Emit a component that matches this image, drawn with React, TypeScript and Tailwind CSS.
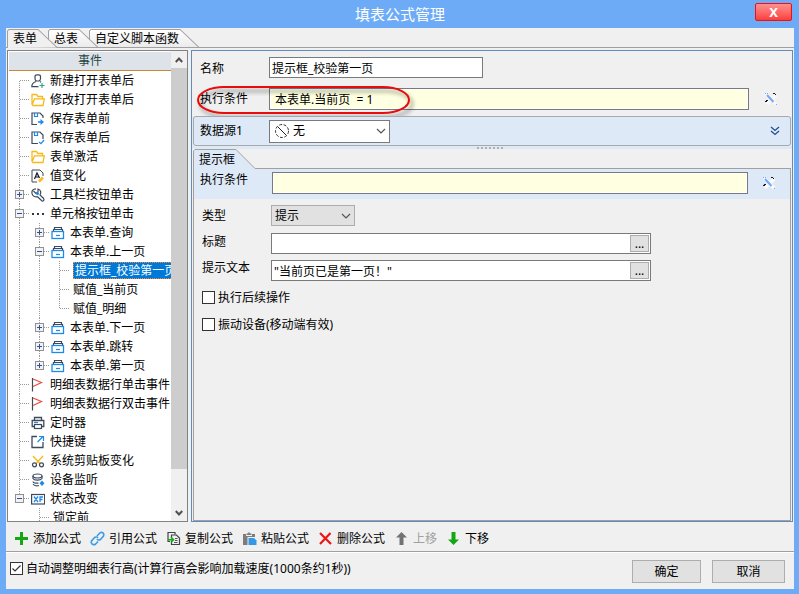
import React, { useState } from "react";

type Guide = "none" | "line" | "first" | "tee" | "last" | "plus" | "minus" | "minusLast" | "plusLast";
type TreeRow = { guides: Guide[]; icon?: IconName; text: string; selected?: boolean };
type IconName =
  | "user" | "folder" | "saveArrow" | "saveCheck" | "value" | "wrench" | "dots" | "box"
  | "flag" | "timer" | "shortcut" | "scissors" | "device" | "state";

const DARK = "#3d4a5c";
const BLUE = "#1e8ae6";
const YELLOW = "#f9b916";

const rows: TreeRow[] = [
  { guides: ["first"], icon: "user", text: "新建打开表单后" },
  { guides: ["tee"], icon: "folder", text: "修改打开表单后" },
  { guides: ["tee"], icon: "saveArrow", text: "保存表单前" },
  { guides: ["tee"], icon: "saveCheck", text: "保存表单后" },
  { guides: ["tee"], icon: "folder", text: "表单激活" },
  { guides: ["tee"], icon: "value", text: "值变化" },
  { guides: ["plus"], icon: "wrench", text: "工具栏按钮单击" },
  { guides: ["minus"], icon: "dots", text: "单元格按钮单击" },
  { guides: ["line", "plus"], icon: "box", text: "本表单.查询" },
  { guides: ["line", "minus"], icon: "box", text: "本表单.上一页" },
  { guides: ["line", "line", "tee"], text: "提示框_校验第一页", selected: true },
  { guides: ["line", "line", "tee"], text: "赋值_当前页" },
  { guides: ["line", "line", "last"], text: "赋值_明细" },
  { guides: ["line", "plus"], icon: "box", text: "本表单.下一页" },
  { guides: ["line", "plus"], icon: "box", text: "本表单.跳转" },
  { guides: ["line", "plusLast"], icon: "box", text: "本表单.第一页" },
  { guides: ["tee"], icon: "flag", text: "明细表数据行单击事件" },
  { guides: ["tee"], icon: "flag", text: "明细表数据行双击事件" },
  { guides: ["tee"], icon: "timer", text: "定时器" },
  { guides: ["tee"], icon: "shortcut", text: "快捷键" },
  { guides: ["tee"], icon: "scissors", text: "系统剪贴板变化" },
  { guides: ["tee"], icon: "device", text: "设备监听" },
  { guides: ["minusLast"], icon: "state", text: "状态改变" },
  { guides: ["none", "tee"], text: "锁定前" },
];

function GuideCell({ kind }: { kind: Guide }) {
  const box = kind.startsWith("plus") || kind.startsWith("minus");
  const top = kind !== "none" && kind !== "first";
  const bottom = ["line", "first", "tee", "plus", "minus"].includes(kind);
  const across = kind !== "none" && kind !== "line";
  return (
    <svg className="h-[19px] w-5 shrink-0" viewBox="0 0 20 19" fill="none" shapeRendering="crispEdges" aria-hidden="true">
      <g stroke="#9a9a9a" strokeDasharray="1 1">
        {top && <path d="M10.5 0V10" />}
        {bottom && <path d="M10.5 10V19" />}
        {across && <path d="M11 9.500H20" />}
      </g>
      {box && (
        <>
          <rect x="6.500" y="5.500" width="8" height="8" fill="#f2f2f2" stroke="#919191" />
          <path d="M8 9.500H13" stroke="#2f4f9f" />
          {kind.startsWith("plus") && <path d="M10.500 7V12" stroke="#2f4f9f" />}
        </>
      )}
    </svg>
  );
}

function TreeIcon({ name }: { name: IconName }) {
  const shapes: Record<IconName, React.ReactNode> = {
    user: (
      <>
        <path d="M4 2.500Q4 .8 6 .8H7.500Q9.500 .8 9.500 2.500V4.500Q9.500 6.500 8 7H5.500Q4 6.500 4 4.500Z" stroke={DARK} strokeWidth="1.200" />
        <path d="M5 7.500C2 8.500 .8 10 .8 12.700H7.500M9 7.500L10 8.300" stroke={DARK} strokeWidth="1.200" />
        <path d="M8.500 11.500H13.500M11 9V14" stroke="#27b07d" strokeWidth="1.200" />
      </>
    ),
    folder: <path d="M1 11.500V1.500H5.500L7 3.500H11.500V5.500M1 12L3.500 5.800H13.300L12 12.500H1.200" stroke={YELLOW} strokeWidth="1.300" />,
    saveArrow: (
      <>
        <path d="M6 12.500H1V1H9L12 4V6" stroke={DARK} strokeWidth="1.200" />
        <path d="M3.500 1V4.500H6.500V1" stroke={BLUE} strokeWidth="1.200" />
        <path d="M7 10H11" stroke={BLUE} strokeWidth="1.600" />
        <path d="M9.500 7L13 10L9.500 13Z" fill={BLUE} />
      </>
    ),
    saveCheck: (
      <>
        <path d="M7 12.500H1V1H9L12 4V8" stroke={DARK} strokeWidth="1.200" />
        <path d="M3.500 1V4.500H6.500V1" stroke={BLUE} strokeWidth="1.200" />
        <path d="M8 11L10 12.700L13 9" stroke={BLUE} strokeWidth="1.200" />
      </>
    ),
    value: (
      <>
        <path d="M6 13H1V1H9L12 4V7" stroke={DARK} />
        <path d="M3.500 10L6 4L8.500 9M4.500 8H7.500" stroke="#111827" strokeWidth="1.200" />
        <path d="M8 12.500L12 8.500" stroke={YELLOW} strokeWidth="2.500" />
      </>
    ),
    wrench: (
      <>
        <path d="M5 .8C2 .8 .5 3 1 5.500C1.500 8 4 9.500 6.500 8.700L11 13C12.500 13.500 13.500 12 12.600 10.500L9 7C10.500 4.500 9.500 1.500 7 1V4L5 5.500L2.500 3" stroke={DARK} strokeWidth="1.200" />
        <circle cx="6.500" cy="5.500" r="1.500" fill={BLUE} />
      </>
    ),
    dots: <path d="M1 7H3M6 7H8M11 7H13" stroke="#2c3644" strokeWidth="2" />,
    box: (
      <>
        <path d="M3.500 3V1.500H10.500V3M2.500 5V3.500H11.500V5" stroke={DARK} strokeWidth="1.200" />
        <rect x="1" y="5.500" width="11.500" height="7" stroke={BLUE} strokeWidth="1.300" />
        <path d="M5 9.500H9" stroke={BLUE} strokeWidth="1.200" />
      </>
    ),
    flag: (
      <>
        <path d="M1.500 0V13.500" stroke={DARK} strokeWidth="1.200" />
        <path d="M2 1L10.500 4.500L2 8.500" stroke="#ee4b3c" strokeWidth="1.200" />
      </>
    ),
    timer: (
      <>
        <path d="M3.500 4V1.500H10.500V4M3 10.500H1.200V4.500H12.800V10.500H11" stroke={DARK} strokeWidth="1.300" />
        <rect x="3.500" y="8.500" width="7" height="4" stroke={DARK} strokeWidth="1.200" />
        <path d="M3 6.500H7" stroke={BLUE} strokeWidth="1.200" />
      </>
    ),
    shortcut: (
      <>
        <path d="M6 1.500H1V12.500H12V7" stroke={DARK} strokeWidth="1.300" />
        <path d="M6.500 7L12 1.500M8 1.500H12.500V6" stroke={BLUE} strokeWidth="1.200" />
      </>
    ),
    scissors: (
      <>
        <path d="M2 2L9 9.500M12 2L5 9.500" stroke={YELLOW} strokeWidth="1.300" />
        <circle cx="3.500" cy="10.800" r="2" stroke={DARK} strokeWidth="1.200" />
        <circle cx="10.500" cy="10.800" r="2" stroke={DARK} strokeWidth="1.200" />
      </>
    ),
    device: (
      <>
        <ellipse cx="6.500" cy="3" rx="4.500" ry="2" stroke={DARK} strokeWidth="1.200" />
        <path d="M2 3V5.500C3 7.500 9 8 11 5.500V3M2 8.500C2 10 5 10.500 7.500 10M2 11C3 12.500 6 13 8 12.500" stroke={DARK} strokeWidth="1.200" />
        <path d="M11 7.500L13.500 10.300L11 13L8.500 10.300Z" fill={BLUE} />
      </>
    ),
    state: (
      <>
        <rect x=".6" y="2.500" width="13" height="9.500" stroke={DARK} strokeWidth="1.200" />
        <path d="M3 4.500L7 10M7 4.500L3 10M9 10V5H12M9 7.500H11.500" stroke={BLUE} strokeWidth="1.300" />
      </>
    ),
  };
  return (
    <svg className="ml-px mr-[5px] h-3.5 w-3.5 shrink-0" viewBox="0 0 14 14" fill="none" aria-hidden="true">
      {shapes[name]}
    </svg>
  );
}

function Tree() {
  return (
    <ul className="flex flex-col" role="tree" aria-label="事件">
      {rows.map((row, i) => (
        <li key={i} role="treeitem" aria-selected={!!row.selected} className="flex h-[19px] shrink-0 items-center">
          {row.guides.map((g, j) => (
            <GuideCell key={j} kind={g} />
          ))}
          {row.icon ? (
            <>
              <span className="w-px shrink-0" />
              <TreeIcon name={row.icon} />
            </>
          ) : (
            <span className="w-1 shrink-0" />
          )}
          <span
            className={
              row.selected
                ? "h-[17px] whitespace-nowrap border border-dotted border-[#ff8728] bg-[#0078d7] pl-px leading-[15px] text-white"
                : "whitespace-nowrap leading-[19px]"
            }
          >
            {row.text}
          </span>
        </li>
      ))}
    </ul>
  );
}

function EventPanel() {
  return (
    <section className="flex w-[181px] shrink-0 border border-[#828282] bg-white">
      <div className="relative min-w-0 flex-1 overflow-hidden">
        <div className="absolute inset-0 overflow-hidden pl-px">
          <h2 className="mt-px h-[19px] border-b border-[#c68a35] bg-[#dee3e9] text-center leading-[18px] text-[#24453f]">事件</h2>
          <Tree />
        </div>
      </div>
      <div className="flex w-4 shrink-0 flex-col bg-[#f0f0f0]">
        <div className="flex h-[17px] items-center justify-center">
          <svg className="h-2 w-2" viewBox="0 0 8 8" fill="none" aria-hidden="true">
            <path d="M.8 6L4 2.500L7.200 6" stroke="#505050" strokeWidth="2" />
          </svg>
        </div>
        <div className="flex-1">
          <div className="h-[92%] bg-[#cdcdcd]" />
        </div>
        <div className="flex h-[17px] items-center justify-center">
          <svg className="h-2 w-2" viewBox="0 0 8 8" fill="none" aria-hidden="true">
            <path d="M.8 2L4 5.500L7.200 2" stroke="#505050" strokeWidth="2" />
          </svg>
        </div>
      </div>
    </section>
  );
}

function Tab({ label, width, active, className }: { label: string; width: number; active?: boolean; className: string }) {
  return (
    <button type="button" role="tab" aria-selected={!!active} className={`relative h-5 pl-1.5 pr-5 text-left leading-[22px] ${className}`}>
      <svg className="absolute inset-0 h-5 w-full" viewBox={`0 0 ${width} 20`} preserveAspectRatio="none" aria-hidden="true">
        <defs>
          <linearGradient id="tabFill" x1="0" y1="0" x2="0" y2="1">
            <stop offset="0" stopColor="#ffffff" />
            <stop offset="1" stopColor="#eaeaea" />
          </linearGradient>
        </defs>
        <path
          d={`M.5 20V3L2 1.500H${width - 19}L${width} 19.500`}
          fill={active ? "#f0f0f0" : "url(#tabFill)"}
          stroke="#a0a0a0"
        />
        {!active && <path d={`M0 19.500H${width}`} stroke="#a0a0a0" />}
      </svg>
      <span className="relative whitespace-nowrap">{label}</span>
    </button>
  );
}

function ExpressionIcon() {
  return (
    <svg className="h-3.5 w-3.5" viewBox="0 0 14 14" fill="none" aria-hidden="true">
      <path d="M3 12L12 3M2 2L12 12" stroke="#fafafa" strokeWidth="3.500" />
      <path d="M3 3L9.500 10" stroke="#7aa9f5" strokeWidth="2.200" />
      <path d="M1 1.500H5M12 12.500H13" stroke="#7aa9f5" strokeDasharray="1 1" />
      <path d="M1 9.500H3M2 8.500H4M9 1.500H11M11 2.500H12" stroke="#171717" />
    </svg>
  );
}

function Chevron() {
  return (
    <svg className="pointer-events-none absolute right-1 top-1/2 h-2.5 w-2.5 -translate-y-1/2" viewBox="0 0 10 10" fill="none" aria-hidden="true">
      <path d="M1 3L5 7L9 3" stroke="#555" strokeWidth="1.200" />
    </svg>
  );
}

const field = "border border-[#7a7a7a] outline-none";
const yellowField = "h-[22px] min-w-0 flex-1 border border-[#7a7a7a] bg-[#ffffe1] pl-[5px] shadow-[inset_0_0_0_1px_#fff] outline-none";

function TextWithButton({ id, value, onChange }: { id: string; value: string; onChange: (v: string) => void }) {
  return (
    <div className="flex h-[21px] w-[380px] items-center border border-[#7a7a7a] bg-white pr-px">
      <input id={id} value={value} onChange={(e) => onChange(e.target.value)} className="h-full min-w-0 flex-1 bg-transparent pl-0.5 outline-none" />
      <button type="button" className="h-[17px] w-[19px] border border-[#adadad] bg-[#e1e1e1] leading-[15px]">
        ...
      </button>
    </div>
  );
}

function CheckBox({ id, label, checked, onChange }: { id: string; label: string; checked: boolean; onChange: () => void }) {
  return (
    <div className="flex h-[13px] items-center">
      <span className="relative flex h-[13px] w-[13px]">
        <input id={id} type="checkbox" checked={checked} onChange={onChange} className="h-[13px] w-[13px] appearance-none border border-[#333] bg-white" />
        {checked && (
          <svg className="pointer-events-none absolute inset-0 h-[13px] w-[13px]" viewBox="0 0 13 13" fill="none" aria-hidden="true">
            <path d="M2.500 6.500L5 9L10.500 3.500" stroke="#333" strokeWidth="1.200" />
          </svg>
        )}
      </span>
      <label htmlFor={id} className="whitespace-nowrap pl-[3px]">{label}</label>
    </div>
  );
}

function Highlight() {
  return (
    <svg className="pointer-events-none absolute -top-1 left-0.5 h-9 w-56" viewBox="0 0 224 36" fill="none" aria-hidden="true">
      <rect x="4" y="3" width="211" height="26" rx="26" ry="13" stroke="#e80c0c" strokeWidth="2" className="drop-shadow-[3px_4px_2px_rgba(0,0,0,0.45)]" />
    </svg>
  );
}

function DetailPanel() {
  const [name, setName] = useState("提示框_校验第一页");
  const [cond, setCond] = useState("本表单.当前页  = 1");
  const [innerCond, setInnerCond] = useState("");
  const [title, setTitle] = useState("");
  const [text, setText] = useState('"当前页已是第一页！"');
  const [follow, setFollow] = useState(false);
  const [vibrate, setVibrate] = useState(false);
  return (
    <section className="flex min-w-0 flex-1 flex-col border border-[#5f8cb8]">
      <div className="flex h-[37px] items-start pl-2 pt-1.5">
        <label htmlFor="name" className="w-[69px] leading-[24px]">名称</label>
        <input id="name" value={name} onChange={(e) => setName(e.target.value)} className={`h-[21px] w-[214px] bg-white pl-0.5 ${field}`} />
      </div>
      <div className="relative flex items-center pl-2">
        <label htmlFor="cond" className="w-[69px]">执行条件</label>
        <input id="cond" value={cond} onChange={(e) => setCond(e.target.value)} className={yellowField} />
        <button type="button" aria-label="编辑条件" className="flex w-[43px] justify-center">
          <ExpressionIcon />
        </button>
        <Highlight />
      </div>
      <div className="relative mt-1.5 bg-[#dce9f7] px-px pb-[3px]">
        <div className="flex h-[30px] items-center rounded-[3px] border border-[#a9a9a9] bg-[#dee9f7] pl-1.5">
          <label htmlFor="source" className="w-[69px]">数据源1</label>
          <div className="relative">
            <select id="source" className="block h-[23px] w-[121px] appearance-none border border-[#7a7a7a] bg-white pl-[23px] outline-none">
              <option>无</option>
            </select>
            <svg className="pointer-events-none absolute left-[5px] top-[3px] h-4 w-4" viewBox="0 0 16 16" fill="none" aria-hidden="true">
              <circle cx="8" cy="8" r="6.500" stroke="#333" strokeDasharray="3 1.500" />
              <path d="M4 4L12 12" stroke="#222" />
            </svg>
            <Chevron />
          </div>
          <button type="button" aria-label="展开" className="ml-auto flex w-[31px] justify-center">
            <svg className="h-2.5 w-2.5" viewBox="0 0 10 10" fill="none" aria-hidden="true">
              <path d="M1 1L5 4.500L9 1M1 5L5 8.500L9 5" stroke="#24508f" strokeWidth="1.300" />
            </svg>
          </button>
        </div>
        <div className="absolute bottom-0 left-[285px] flex gap-0.5">
          {[0, 1, 2, 3, 4, 5, 6].map((n) => (
            <span key={n} className="h-0.5 w-0.5 bg-[#b0b0b0]" />
          ))}
        </div>
      </div>
      <div className="flex min-h-0 flex-1 flex-col px-px">
        <div className="flex h-5 items-stretch">
          <button type="button" role="tab" aria-selected="true" className="relative w-16 shrink-0 pl-1.5 text-left leading-[22px]">
            <svg className="absolute inset-0 h-5 w-16" viewBox="0 0 64 20" aria-hidden="true">
              <path d="M.5 20V2L2 .5H43L62 19.500H64V20Z" fill="#dee9f7" />
              <path d="M.5 20V2L2 .5H43L62 19.500H64" fill="none" stroke="#a0a0a0" />
            </svg>
            <span className="relative">提示框</span>
          </button>
          <div className="flex-1 border-b border-[#a0a0a0]" />
        </div>
        <div className="flex flex-1 flex-col border-x border-b border-[#a0a0a0]">
          <div className="flex items-start bg-[#dee9f7] pb-[5px] pl-1.5 pt-[3px]">
            <label htmlFor="innerCond" className="w-[72px] leading-[16px]">执行条件</label>
            <input id="innerCond" value={innerCond} onChange={(e) => setInnerCond(e.target.value)} className={yellowField} />
            <button type="button" aria-label="编辑提示框条件" className="flex w-[42px] justify-center self-center">
              <ExpressionIcon />
            </button>
          </div>
          <div className="flex flex-col gap-1.5 pl-2 pt-1.5">
            <div className="flex h-[22px] items-start">
              <label htmlFor="kind" className="w-[69px] leading-[22px]">类型</label>
              <div className="relative">
                <select id="kind" className="block h-[21px] w-[84px] appearance-none border border-[#adadad] bg-[#e1e1e1] pl-[3px] outline-none">
                  <option>提示</option>
                </select>
                <Chevron />
              </div>
            </div>
            <div className="flex items-start">
              <label htmlFor="title" className="w-[69px] leading-[18px]">标题</label>
              <TextWithButton id="title" value={title} onChange={setTitle} />
            </div>
            <div className="flex items-start">
              <label htmlFor="text" className="w-[69px] leading-[16px]">提示文本</label>
              <TextWithButton id="text" value={text} onChange={setText} />
            </div>
          </div>
          <div className="flex flex-col gap-3.5 pl-2 pt-2.5">
            <CheckBox id="follow" label="执行后续操作" checked={follow} onChange={() => setFollow(!follow)} />
            <CheckBox id="vibrate" label="振动设备(移动端有效)" checked={vibrate} onChange={() => setVibrate(!vibrate)} />
          </div>
        </div>
      </div>
    </section>
  );
}

const tools: { label: string; disabled?: boolean; icon: React.ReactNode }[] = [
  { label: "添加公式", icon: <path d="M7.500 1V14M1 7.500H14" stroke="#14a614" strokeWidth="3" /> },
  {
    label: "引用公式",
    icon: (
      <g stroke="#3a9be6" strokeWidth="1.600">
        <path d="M7 5L10 1.800C12 .5 14.500 2.500 13.500 5L10.500 8.500C9 9.500 7.500 9 7 8" />
        <path d="M8 10.500L5.500 13.200C3 14.500 .5 12.500 1.500 10L4.500 6.500C6 5.500 7.500 6 8 7" />
      </g>
    ),
  },
  {
    label: "复制公式",
    icon: (
      <>
        <path d="M4 10.500H2V1.500H9V3.500" stroke="#444" strokeWidth="1.200" />
        <path d="M5.500 7V4H10.500L13.500 7V13.500H5.500V10.500" stroke="#444" strokeWidth="1.200" />
        <path d="M9 7.500H11.500M9 9.500H11.500M8 11.500H11.500" stroke="#555" />
        <path d="M2 8.700H7M5 6.200L7.500 8.700L5 11.200" stroke="#14a614" strokeWidth="1.600" />
      </>
    ),
  },
  {
    label: "粘贴公式",
    icon: (
      <>
        <path d="M1 3H4V5H10V3H13V6H5.500V14H1Z" fill="#7d7d7d" />
        <path d="M4.500 4V2.500H6L7 .8L8 2.500H9.500V4Z" fill="#7d7d7d" />
        <path d="M6.500 7H12L14.500 9.500V14H6.500Z" fill="#3597e8" />
      </>
    ),
  },
  { label: "删除公式", icon: <path d="M2 2L13 13M12.500 2L2 13" stroke="#f01414" strokeWidth="2.200" /> },
  { label: "上移", disabled: true, icon: <path d="M7.500 1L13 6.500H9.500V14H5.500V6.500H2Z" fill="#727272" /> },
  { label: "下移", icon: <path d="M7.500 14L2 8.500H5.500V1H9.500V8.500H13Z" fill="#14a614" /> },
];

export default function App() {
  const [auto, setAuto] = useState(true);
  return (
    <div className="flex min-h-screen flex-col bg-[#6dabf7] pb-[5px] pl-1.5 pr-[5px] font-['Noto_Sans','Noto_Sans_CJK_SC',sans-serif] text-[12px] leading-[18px] text-black">
      <header className="relative flex h-7 items-center justify-center">
        <h1 className="text-[15px] text-white">填表公式管理</h1>
        <button
          type="button"
          aria-label="关闭"
          className="absolute right-0.5 top-[3px] h-[18px] w-[37px] rounded-xs border border-[#f01010] bg-linear-to-b from-[#ff8e8e] to-[#fb3c3c] text-[13px] font-bold leading-[16px] text-white"
        >
          X
        </button>
      </header>
      <main className="flex flex-1 flex-col bg-[#f0f0f0]">
        <nav className="isolate flex h-5 border-b border-[#a0a0a0] pl-px" role="tablist">
          <Tab label="表单" width={50} active className="z-30 -mr-[9px]" />
          <Tab label="总表" width={50} className="z-20 -mr-[9px]" />
          <Tab label="自定义脚本函数" width={110} className="z-10" />
        </nav>
        <div className="flex flex-1 gap-[3px] px-px pt-0.5">
          <EventPanel />
          <DetailPanel />
        </div>
        <div className="flex h-[29px] items-center gap-[9px] pl-2 pt-1" role="toolbar">
          {tools.map((t) => (
            <button
              key={t.label}
              type="button"
              disabled={t.disabled}
              className="flex items-center gap-1 whitespace-nowrap disabled:text-[#a0a0a0]"
            >
              <svg className="h-[15px] w-[15px]" viewBox="0 0 15 15" fill="none" aria-hidden="true">
                {t.icon}
              </svg>
              {t.label}
            </button>
          ))}
        </div>
        <footer className="flex h-[38px] items-start border-t border-[#a0a0a0] pl-1 pr-[9px] shadow-[inset_0_1px_0_#fff]">
          <div className="pt-2.5">
            <CheckBox id="auto" label="自动调整明细表行高(计算行高会影响加载速度(1000条约1秒))" checked={auto} onChange={() => setAuto(!auto)} />
          </div>
          <div className="ml-auto flex gap-[11px] pt-2">
            <button type="button" className="h-[23px] w-[69px] border border-[#adadad] bg-[#e1e1e1]">确定</button>
            <button type="button" className="h-[23px] w-[73px] border border-[#adadad] bg-[#e1e1e1]">取消</button>
          </div>
        </footer>
      </main>
    </div>
  );
}
